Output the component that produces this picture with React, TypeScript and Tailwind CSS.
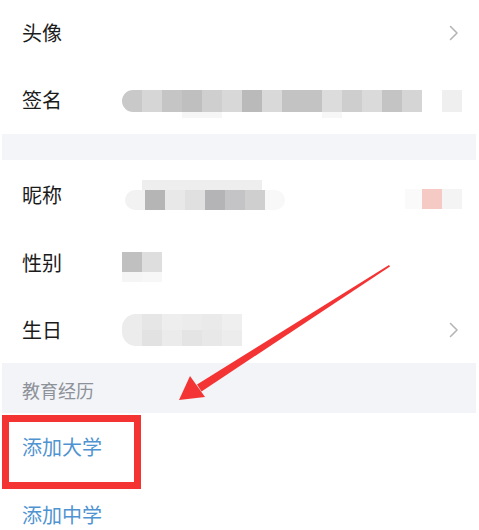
import React from "react";

const font = { fontFamily: '"Noto Sans CJK SC", "Noto Sans", sans-serif' };

function Cells({ colors, h, first, last, tl, bl }: { colors: string[]; h: string; first?: boolean; last?: boolean; tl?: boolean; bl?: boolean }) {
  return (
    <div className="flex">
      {colors.map((c, i) => (
        <div
          key={i}
          className={`w-[20px] ${h} ${first && i === 0 ? "rounded-l-full" : ""} ${last && i === colors.length - 1 ? "rounded-r-full" : ""} ${tl && i === 0 ? "rounded-tl-[14px]" : ""} ${bl && i === 0 ? "rounded-bl-[14px]" : ""}`}
          style={{ backgroundColor: c }}
        />
      ))}
    </div>
  );
}

function Chevron() {
  return (
    <svg width="10" height="16" viewBox="0 0 10 16" className="shrink-0">
      <path d="M1.5 1.5 L8 8 L1.5 14.5" fill="none" stroke="#b5b5b5" strokeWidth="1.6" strokeLinecap="round" strokeLinejoin="round" />
    </svg>
  );
}

export default function App() {
  const sig = ["#c9c9c9", "#d6d6d6", "#c5c5c5", "#bfbfbf", "#cfcfcf", "#d8d8d8", "#bababa", "#d9d9d9", "#c3c3c3", "#c3c3c3", "#dcdcdc", "#cecece", "#dadada", "#c4c4c4", "#d5d5d5", "#ffffff", "#efefef"];
  const sig2 = ["#ffffff", "#ffffff", "#ffffff", "#f6f6f6", "#f6f6f6", "#ffffff", "#ffffff", "#ffffff", "#ffffff", "#ffffff", "#f7f7f7", "#ffffff", "#ffffff", "#ffffff", "#ffffff", "#ffffff", "#ffffff"];
  return (
    <div className="relative w-[479px] h-[530px] overflow-hidden bg-white text-[#1b1b1b]" style={font}>
      {/* 头像 */}
      <div className="h-[66px] flex items-center pl-[22px] pr-[20px]">
        <span className="text-[20px] leading-none">头像</span>
        <div className="flex-1" />
        <Chevron />
      </div>
      {/* 签名 */}
      <div className="h-[68px] flex items-center pl-[22px]">
        <span className="text-[20px] leading-none w-[100px]">签名</span>
        <div className="flex flex-col mt-[8px]">
          <Cells colors={sig} h="h-[22px]" first />
          <Cells colors={sig2} h="h-[6px]" />
        </div>
      </div>
      <div className="h-[26px] bg-[#f3f5f8] ml-[2px] mr-[3px]" />
      {/* 昵称 */}
      <div className="h-[69px] flex items-center pl-[22px]">
        <span className="text-[20px] leading-none w-[103px]">昵称</span>
        <div className="flex flex-col">
          <div className="flex ml-[17px]">
            <div className="w-[120px] h-[10px] bg-[#eeeeee]" />
          </div>
          <Cells colors={["#f2f2f2", "#b5b5b6", "#e8e8e8", "#e0e0e0", "#b4b4b6", "#c4c4c6", "#cfcfd0", "#f8f8f8"]} h="h-[20px]" first last />
        </div>
        <div className="flex-1" />
        <div className="flex mr-[17px] mt-[8px]">
          <div className="w-[17px] h-[20px] bg-[#fafafa]" />
          <div className="w-[20px] h-[20px] bg-[#f5c9c4]" />
          <div className="w-[20px] h-[20px] bg-[#f4f4f4]" />
        </div>
      </div>
      {/* 性别 */}
      <div className="h-[67px] flex items-center pl-[22px]">
        <span className="text-[20px] leading-none w-[100px]">性别</span>
        <div className="flex flex-col mt-[8px]">
          <Cells colors={["#c0c0c0", "#dedede"]} h="h-[20px]" />
          <Cells colors={["#f5f5f5", "#f7f7f7"]} h="h-[10px]" />
        </div>
      </div>
      {/* 生日 */}
      <div className="h-[67px] flex items-center pl-[22px] pr-[20px]">
        <span className="text-[20px] leading-none w-[100px]">生日</span>
        <div className="flex flex-col">
          <Cells colors={["#ececec", "#e6e6e6", "#eeeeee", "#ececec", "#eaeaea", "#efefef"]} h="h-[16px]" tl />
          <Cells colors={["#ececec", "#e2e2e2", "#ebebeb", "#e4e4e4", "#e8e8e8", "#ececec"]} h="h-[16px]" bl />
        </div>
        <div className="flex-1" />
        <Chevron />
      </div>
      {/* 教育经历 */}
      <div className="h-[50px] bg-[#f2f4f7] ml-[2px] mr-[3px] flex items-center pl-[20px]">
        <span className="text-[18px] leading-none text-[#8d9199] mt-[3px]">教育经历</span>
      </div>
      <div className="h-[68px] flex items-center pl-[22px]">
        <span className="text-[20px] leading-none text-[#4f93d0]">添加大学</span>
      </div>
      <div className="h-[68px] flex items-center pl-[22px]">
        <span className="text-[20px] leading-none text-[#4f93d0]">添加中学</span>
      </div>

      {/* annotation: red box */}
      <div className="absolute left-[2px] top-[415px] w-[139px] h-[74px] border-[7px] border-[#f43333]" />
      {/* annotation: arrow */}
      <svg className="absolute left-0 top-0" width="479" height="530" viewBox="0 0 479 530">
        <polygon points="389,265 197,384.5 201.5,391.5 390,266.5" fill="#f43434" />
        <polygon points="179,400 190,376 205,397" fill="#f43434" />
      </svg>
    </div>
  );
}
